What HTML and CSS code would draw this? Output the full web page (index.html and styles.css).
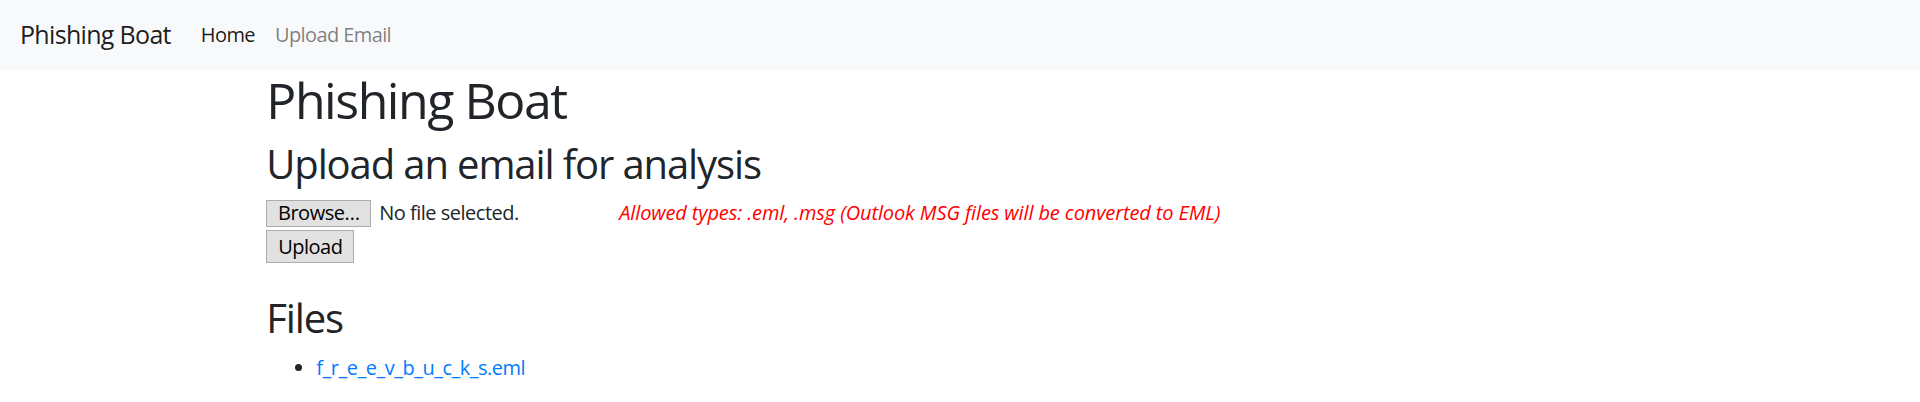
FILE: index.html
```html
<!DOCTYPE html>
<html lang="en">
<head>
<meta charset="utf-8">
<title>Phishing Boat</title>
<link rel="stylesheet" href="styles.css">
</head>
<body>
<nav class="navbar">
  <a class="brand" href="#">Phishing Boat</a>
  <ul class="nav">
    <li><a class="nav-link active" href="#">Home</a></li>
    <li><a class="nav-link" href="#">Upload Email</a></li>
  </ul>
</nav>
<main class="container">
  <h1 class="title">Phishing Boat</h1>
  <h2 class="subtitle">Upload an email for analysis</h2>
  <form class="upload-form">
    <div class="file-row">
      <span class="file-input"><span class="file-btn">Browse…</span><span class="file-label">No file selected.</span></span>
      <span class="hint">Allowed types: .eml, .msg (Outlook MSG files will be converted to EML)</span>
    </div>
    <div class="submit-row"><button type="button" class="submit-btn">Upload</button></div>
  </form>
  <h2 class="files-title">Files</h2>
  <ul class="file-list">
    <li><a href="#">f_r_e_e_v_b_u_c_k_s.eml</a></li>
  </ul>
</main>
</body>
</html>
```

FILE: styles.css
```css
* { box-sizing: border-box; }

body {
  margin: 0;
  font-family: "Open Sans", "Noto Sans", sans-serif;
  font-size: 20px;
  line-height: 30px;
  color: #212529;
  background: #fff;
  letter-spacing: -0.025em;
}

a { text-decoration: none; }

.navbar {
  display: flex;
  align-items: center;
  height: 70px;
  padding: 10px 20px;
  background: #f8f9fa;
}

.brand {
  font-size: 25px;
  line-height: 37.5px;
  padding: 6.25px 0;
  margin-right: 20px;
  color: rgba(0, 0, 0, 0.9);
  letter-spacing: -0.027em;
}

.nav {
  display: flex;
  list-style: none;
  margin: 0;
  padding: 0;
}

.nav-link {
  display: block;
  padding: 10px;
  color: rgba(0, 0, 0, 0.5);
  letter-spacing: -0.03em;
}

.nav-link.active { color: rgba(0, 0, 0, 0.9); }

.container {
  max-width: 1425px;
  margin: 0 auto;
  padding: 0 18.75px;
}

.title {
  margin: 0 0 10px;
  font-size: 50px;
  line-height: 60px;
  font-weight: 400;
  letter-spacing: -0.029em;
}

.subtitle, .files-title {
  margin: 0 0 10px;
  font-size: 40px;
  line-height: 48px;
  font-weight: 400;
  letter-spacing: -0.028em;
}

.upload-form { margin: 0; }

.file-row {
  display: flex;
  align-items: center;
  height: 30px;
}

.file-input {
  display: flex;
  align-items: center;
  width: 353px;
}

.file-btn {
  display: flex;
  align-items: center;
  justify-content: center;
  width: 105px;
  height: 27px;
  background: #e1e1e1;
  border: 1px solid #adadad;
  color: #000;
}

.file-label { margin-left: 8px; }

.hint {
  color: red;
  font-style: italic;
  letter-spacing: -0.006em;
}

.submit-row {
  display: flex;
  margin-top: 2px;
}

.submit-btn {
  width: 88px;
  height: 33px;
  padding: 0;
  font: inherit;
  letter-spacing: inherit;
  color: #000;
  background: #e1e1e1;
  border: 1px solid #adadad;
  border-radius: 0;
}

.files-title { margin-top: 31px; margin-bottom: 11px; }

.file-list {
  margin: 0 0 20px;
  padding-left: 50px;
}

.file-list a { color: #007bff; }
```
